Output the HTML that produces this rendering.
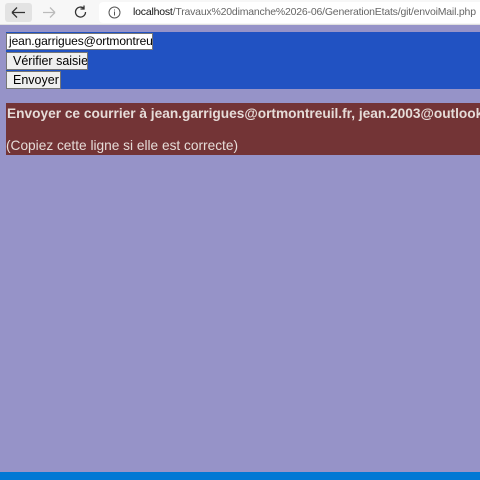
<!DOCTYPE html>
<html><head><meta charset="utf-8"><style>
*{margin:0;padding:0;box-sizing:border-box}
body{width:480px;height:480px;overflow:hidden;background:#9693c8;font-family:"Liberation Sans",sans-serif;position:relative}
.tb{position:absolute;left:0;top:0;width:480px;height:25px;background:#f7f7f7;border-bottom:1px solid #e0e0e0}
.back{position:absolute;left:5px;top:3px;width:27px;height:19px;background:#e3e3e3;border-radius:3px}
.addr{position:absolute;left:99px;top:2px;width:381px;height:21px;background:#fff;border-radius:4px 0 0 4px}
.url{position:absolute;left:133px;top:6px;font-size:10.5px;color:#666;white-space:nowrap;letter-spacing:-0.2px}
.url b{font-weight:normal;color:#111}
.blue{position:absolute;left:6px;top:32px;width:474px;height:57px;background:#2152c2}
.inp{position:absolute;left:6px;top:33px;width:147px;height:17px;background:#fff;border:1px solid #767676;font-size:12px;line-height:15px;padding-left:2px;overflow:hidden;white-space:nowrap;color:#000;letter-spacing:-0.1px}
.btn{position:absolute;left:6px;background:#efefef;border:1px solid #767676;font-size:12.5px;line-height:16px;padding:0 6px;color:#000;white-space:nowrap;overflow:hidden}
.red{position:absolute;left:6px;top:103px;width:474px;height:52px;background:#733436;color:#e6dcd8;white-space:nowrap;overflow:hidden}
.l1{position:absolute;left:1px;top:3px;font-weight:bold;font-size:13.7px}
.l2{position:absolute;left:0;top:35px;font-size:13.7px}
.bot{position:absolute;left:0;top:472px;width:480px;height:8px;background:#0078d4}
</style></head><body>
<div class="tb"><div class="back"></div>
<svg style="position:absolute;left:0;top:0" width="100" height="25"><path d="M12 12.5h13M12 12.5l5-5M12 12.5l5 5" stroke="#333" stroke-width="1.3" fill="none"/><path d="M43 12.5h12M55 12.5l-5-5M55 12.5l-5 5" stroke="#bbb" stroke-width="1.3" fill="none"/><path d="M84 8.5a5 5 0 1 0 1.5 3.5M84 5.5v3.5h-3.5" stroke="#333" stroke-width="1.3" fill="none"/></svg>
<div class="addr"></div>
<svg style="position:absolute;left:108px;top:6px" width="13" height="13"><circle cx="6.5" cy="6.5" r="5.5" stroke="#555" fill="none"/><path d="M6.5 5.5v4M6.5 3.5v1" stroke="#555"/></svg>
<div class="url"><b>localhost</b>/Travaux%20dimanche%2026-06/GenerationEtats/git/envoiMail.php</div>
</div>
<div class="blue"></div>
<div class="inp">jean.garrigues@ortmontreu</div>
<div class="btn" style="top:52px;height:18px;width:82px">Vérifier saisie</div>
<div class="btn" style="top:71px;height:18px;width:55px">Envoyer</div>
<div class="red"><div class="l1">Envoyer ce courrier à jean.garrigues@ortmontreuil.fr, jean.2003@outlook.fr</div><div class="l2">(Copiez cette ligne si elle est correcte)</div></div>
<div class="bot"></div>
</body></html>
